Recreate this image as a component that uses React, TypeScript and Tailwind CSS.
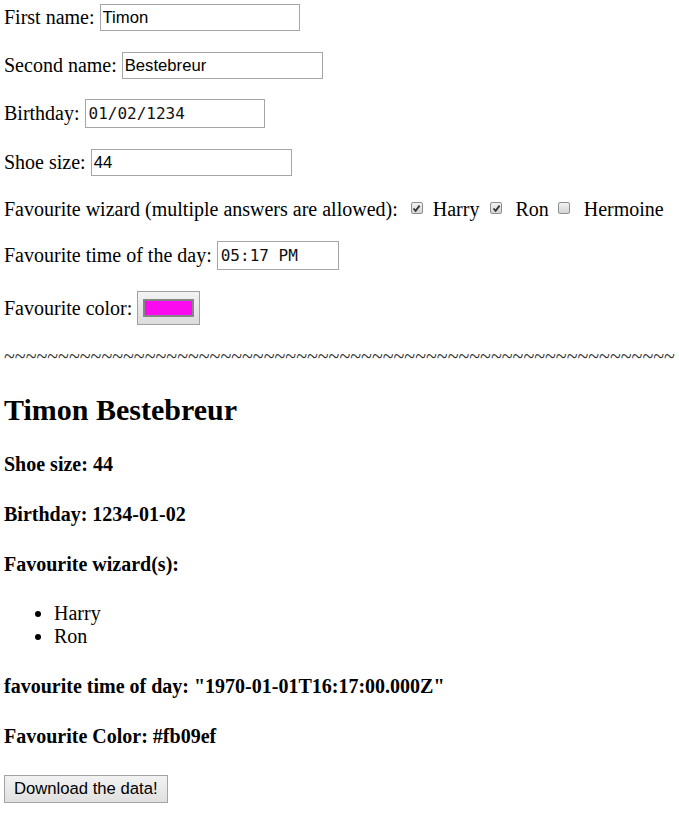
import React from "react";

const inputClass =
	"h-[27px] border border-[#a6a6a6] bg-white pl-[2px] text-[16.67px] text-black font-['Liberation_Sans',Arial,sans-serif] outline-none";

const monoInputClass =
	"h-[29px] border border-[#a6a6a6] bg-white pl-[3px] text-[16px] text-[#111] font-['DejaVu_Sans_Mono','Liberation_Mono',monospace] outline-none";

const Checkbox = ({ checked }: { checked: boolean }) => (
	<span className="mt-[4px] flex h-[12px] w-[12px] items-center justify-center self-start rounded-[2px] border border-[#8e8e8e] bg-gradient-to-b from-[#f2f2f2] to-[#d4d4d4]">
		{checked && (
			<svg width="9" height="9" viewBox="0 0 9 9">
				<path d="M1.5 4.5 L3.6 6.8 L7.6 1.6" fill="none" stroke="#333" strokeWidth="1.8" />
			</svg>
		)}
	</span>
);

const App = () => {
	return (
		<div className="flex flex-col px-[4px] text-[20px] leading-[23px] text-black font-['Liberation_Serif','Times_New_Roman',serif]">
			{/* Form */}
			<div className="mt-[4px] flex h-[27px] items-center gap-[5px]">
				<span>First name:</span>
				<input className={`${inputClass} w-[200px]`} defaultValue="Timon" />
			</div>

			<div className="mt-[21px] flex h-[27px] items-center gap-[5px]">
				<span>Second name:</span>
				<input className={`${inputClass} w-[201px]`} defaultValue="Bestebreur" />
			</div>

			<div className="mt-[20px] flex h-[29px] items-center gap-[5px]">
				<span>Birthday:</span>
				<input className={`${monoInputClass} w-[180px]`} defaultValue="01/02/1234" />
			</div>

			<div className="mt-[21px] flex h-[27px] items-center gap-[5px]">
				<span>Shoe size:</span>
				<input className={`${inputClass} w-[201px]`} defaultValue="44" />
			</div>

			<div className="mt-[22px] flex h-[23px] items-start">
				<span>Favourite wizard (multiple answers are allowed):</span>
				<span className="ml-[13px]" />
				<Checkbox checked />
				<span className="ml-[10px]">Harry</span>
				<span className="ml-[11px]" />
				<Checkbox checked />
				<span className="ml-[13px]">Ron</span>
				<span className="ml-[9px]" />
				<Checkbox checked={false} />
				<span className="ml-[14px]">Hermoine</span>
			</div>

			<div className="mt-[20px] flex h-[29px] items-center gap-[5px]">
				<span>Favourite time of the day:</span>
				<input className={`${monoInputClass} w-[122px]`} defaultValue="05:17 PM" />
			</div>

			<div className="mt-[21px] flex h-[34px] items-center gap-[5px]">
				<span>Favourite color:</span>
				<button className="flex h-[34px] w-[63px] items-center justify-center border border-[#a0a0a0] bg-gradient-to-b from-[#f3f3f3] to-[#dcdcdc]">
					<span className="h-[18px] w-[51px] border-2 border-[#858585] bg-[#fb09ef]" />
				</button>
			</div>

			{/* Divider */}
			<div className="mt-[20px] h-[23px] overflow-hidden whitespace-nowrap text-[#333]">
				{"~".repeat(62)}
			</div>

			{/* Result */}
			<h1 className="mt-[24px] text-[30px] leading-[35px] font-bold">Timon Bestebreur</h1>

			<h4 className="mt-[26px] font-bold">Shoe size: 44</h4>
			<h4 className="mt-[27px] font-bold">Birthday: 1234-01-02</h4>
			<h4 className="mt-[27px] font-bold">Favourite wizard(s):</h4>

			<ul className="mt-[26px] list-disc pl-[50px]">
				<li>Harry</li>
				<li>Ron</li>
			</ul>

			<h4 className="mt-[27px] font-bold">favourite time of day: "1970-01-01T16:17:00.000Z"</h4>
			<h4 className="mt-[27px] font-bold">Favourite Color: #fb09ef</h4>

			<div className="mt-[27px]">
				<button className="h-[28px] border border-[#a3a3a3] bg-gradient-to-b from-[#f2f2f2] to-[#e0e0e0] px-[9px] text-[16.67px] leading-[20px] text-black font-['Liberation_Sans',Arial,sans-serif]">
					Download the data!
				</button>
			</div>
		</div>
	);
};

export default App;
